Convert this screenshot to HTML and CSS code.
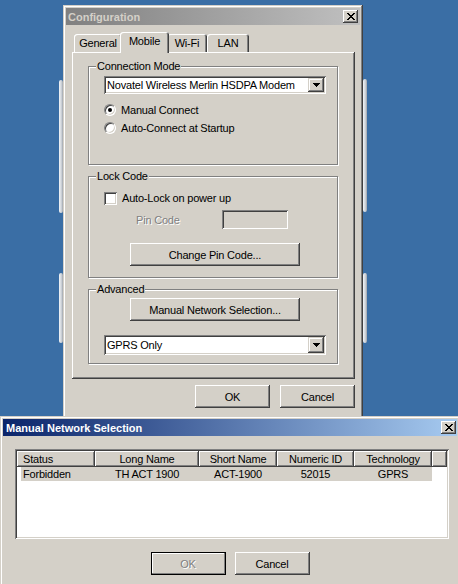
FILE: index.html
```html
<!DOCTYPE html>
<html>
<head>
<meta charset="utf-8">
<title>Configuration</title>
<link rel="stylesheet" href="styles.css">
</head>
<body>
  <div class="edge edge-l1"></div>
  <div class="edge edge-l2"></div>
  <div class="edge edge-r1"></div>
  <div class="edge edge-r2"></div>

  <div class="window config">
    <div class="titlebar inactive">
      <span class="title">Configuration</span>
      <span class="close"><svg width="8" height="7" viewBox="0 0 8 7" shape-rendering="crispEdges"><path fill="#000" d="M0 0h2v1H0zM6 0h2v1H6zM1 1h2v1H1zM5 1h2v1H5zM2 2h4v1H2zM3 3h2v1H3zM2 4h4v1H2zM1 5h2v1H1zM5 5h2v1H5zM0 6h2v1H0zM6 6h2v1H6z"/></svg></span>
    </div>
    <div class="tabstrip">
      <div class="tab tab-general">General</div>
      <div class="tab tab-mobile selected">Mobile</div>
      <div class="tab tab-wifi">Wi-Fi</div>
      <div class="tab tab-lan">LAN</div>
    </div>
    <div class="panel">
      <div class="group group-conn">
        <div class="legend">Connection Mode</div>
        <div class="combo combo-modem">
          <span class="combo-text">Novatel Wireless Merlin HSDPA Modem</span>
          <span class="combo-btn"><svg width="7" height="4" viewBox="0 0 7 4" shape-rendering="crispEdges"><path fill="#000" d="M0 0h7v1H0zM1 1h5v1H1zM2 2h3v1H2zM3 3h1v1H3z"/></svg></span>
        </div>
        <div class="option option-first"><span class="radio checked"></span><span>Manual Connect</span></div>
        <div class="option"><span class="radio"></span><span>Auto-Connect at Startup</span></div>
      </div>

      <div class="group group-lock">
        <div class="legend">Lock Code</div>
        <div class="check-row"><span class="checkbox"></span><span>Auto-Lock on power up</span></div>
        <div class="pin-row"><span class="pin-label">Pin Code</span><span class="textbox"></span></div>
        <button class="btn btn-wide btn-pin">Change Pin Code...</button>
      </div>

      <div class="group group-adv">
        <div class="legend">Advanced</div>
        <button class="btn btn-wide btn-mns">Manual Network Selection...</button>
        <div class="combo combo-gprs">
          <span class="combo-text">GPRS Only</span>
          <span class="combo-btn"><svg width="7" height="4" viewBox="0 0 7 4" shape-rendering="crispEdges"><path fill="#000" d="M0 0h7v1H0zM1 1h5v1H1zM2 2h3v1H2zM3 3h1v1H3z"/></svg></span>
        </div>
      </div>
    </div>
    <div class="button-row">
      <button class="btn">OK</button>
      <button class="btn">Cancel</button>
    </div>
  </div>

  <div class="window mns">
    <div class="titlebar active">
      <span class="title">Manual Network Selection</span>
      <span class="close"><svg width="8" height="7" viewBox="0 0 8 7" shape-rendering="crispEdges"><path fill="#000" d="M0 0h2v1H0zM6 0h2v1H6zM1 1h2v1H1zM5 1h2v1H5zM2 2h4v1H2zM3 3h2v1H3zM2 4h4v1H2zM1 5h2v1H1zM5 5h2v1H5zM0 6h2v1H0zM6 6h2v1H6z"/></svg></span>
    </div>
    <div class="listview">
      <div class="lv-header">
        <div class="hcell h-status">Status</div>
        <div class="hcell h-long">Long Name</div>
        <div class="hcell h-short">Short Name</div>
        <div class="hcell h-num">Numeric ID</div>
        <div class="hcell h-tech">Technology</div>
        <div class="hcell h-filler"></div>
      </div>
      <div class="lv-row">
        <div class="cell r-status">Forbidden</div>
        <div class="cell r-long">TH ACT 1900</div>
        <div class="cell r-short">ACT-1900</div>
        <div class="cell r-num">52015</div>
        <div class="cell r-tech">GPRS</div>
      </div>
    </div>
    <div class="dlg-buttons">
      <button class="btn btn-default" disabled><span class="disabled-text">OK</span></button>
      <button class="btn">Cancel</button>
    </div>
  </div>
</body>
</html>
```

FILE: styles.css
```css
* { box-sizing: border-box; }

html, body { margin: 0; padding: 0; }

body {
  width: 458px;
  height: 584px;
  overflow: hidden;
  position: relative;
  background: #3a6ea5;
  font-family: "Liberation Sans", Arial, sans-serif;
  font-size: 11px;
  letter-spacing: -0.2px;
  color: #000;
}

/* edges of windows lying behind on the desktop */
.edge {
  position: absolute;
  width: 4px;
  border-radius: 2px;
  background: linear-gradient(to right, #f2f5f9, #cdd2d8 60%, #9ea4ac);
}
.edge-l1 { left: 59px; top: 80px; height: 133px; }
.edge-l2 { left: 59px; top: 273px; height: 70px; }
.edge-r1 { left: 363px; top: 79px; height: 133px; }
.edge-r2 { left: 363px; top: 273px; height: 70px; }

/* windows */
.window {
  position: absolute;
  background: #d4d0c8;
  padding: 3px;
  box-shadow: inset -1px -1px #404040, inset 1px 1px #d4d0c8,
              inset -2px -2px #808080, inset 2px 2px #fff;
}
.config { left: 63px; top: 5px; width: 300px; height: 440px; }
.mns { left: 0; top: 416px; width: 460px; height: 180px; }

.titlebar {
  height: 17px;
  display: flex;
  align-items: center;
  justify-content: space-between;
  padding-left: 2px;
  font-weight: bold;
  letter-spacing: 0;
  white-space: nowrap;
}
.titlebar.inactive { background: linear-gradient(to right, #808080, #c0c0c0); color: #d4d0c8; }
.titlebar.active { background: linear-gradient(to right, #0a246a, #a6caf0); color: #fff; padding-left: 3px; }

.close {
  width: 15px;
  height: 13px;
  margin-right: 2px;
  background: #d4d0c8;
  display: flex;
  align-items: center;
  justify-content: center;
  box-shadow: inset -1px -1px #404040, inset 1px 1px #fff,
              inset -2px -2px #808080, inset 2px 2px #d4d0c8;
}
.mns .close { margin-right: 1px; }

/* tabs */
.tabstrip {
  display: flex;
  align-items: flex-end;
  height: 20px;
  margin: 7px 0 0 6px;
  padding-left: 2px;
}
.tab {
  height: 18px;
  line-height: 18px;
  text-align: center;
  background: #d4d0c8;
  border-radius: 3px 3px 0 0;
  box-shadow: inset 1px 1px #fff, inset -1px 0 #404040, inset -2px 0 #808080;
}
.tab-general { width: 48px; }
.tab-mobile { width: 49px; }
.tab-wifi { width: 40px; }
.tab-lan { width: 42px; }
.tab.selected {
  position: relative;
  z-index: 1;
  height: 21px;
  margin: 0 -2px -1px -2px;
  padding-bottom: 3px;
}

.panel {
  margin-left: 6px;
  width: 283px;
  height: 327px;
  padding: 14px 17px 0 16px;
  box-shadow: inset -1px -1px #404040, inset 1px 1px #fff, inset -2px -2px #808080;
}

/* group boxes */
.group {
  width: 250px;
  border: 1px solid #808080;
  box-shadow: inset 1px 1px #fff, 1px 1px #fff;
  padding-left: 15px;
}
.group-conn { height: 99px; }
.group-lock { height: 102px; margin-top: 11px; }
.group-adv { height: 75px; margin-top: 11px; }

.legend {
  width: fit-content;
  height: 13px;
  line-height: 13px;
  margin: -7px 0 0 -8px;
  padding: 0 1px;
  background: #d4d0c8;
  white-space: nowrap;
}

/* combo boxes */
.combo {
  display: flex;
  align-items: stretch;
  width: 222px;
  background: #fff;
  padding: 2px;
  box-shadow: inset 1px 1px #808080, inset -1px -1px #fff,
              inset 2px 2px #404040, inset -2px -2px #d4d0c8;
}
.combo-modem { height: 18px; margin-top: 3px; }
.combo-gprs { height: 20px; margin-top: 14px; }
.combo-text {
  flex: 1;
  padding-left: 1px;
  display: flex;
  align-items: center;
  white-space: nowrap;
  overflow: hidden;
}
.combo-btn {
  width: 16px;
  display: flex;
  align-items: center;
  justify-content: center;
  background: #d4d0c8;
  box-shadow: inset -1px -1px #404040, inset 1px 1px #d4d0c8,
              inset -2px -2px #808080, inset 2px 2px #fff;
}

/* radio options */
.option {
  display: flex;
  align-items: center;
  gap: 5px;
  height: 18px;
  white-space: nowrap;
}
.option-first { margin-top: 7px; }
.radio {
  position: relative;
  width: 12px;
  height: 12px;
  border-radius: 50%;
  background: #fff;
  border: 1px solid;
  border-color: #808080 #fff #fff #808080;
  box-shadow: inset 1px 1px #404040, inset -1px -1px #d4d0c8;
}
.radio.checked::after {
  content: "";
  position: absolute;
  left: 3px;
  top: 3px;
  width: 4px;
  height: 4px;
  border-radius: 50%;
  background: #000;
}

/* lock code */
.check-row {
  display: flex;
  align-items: center;
  gap: 5px;
  height: 18px;
  margin-top: 6px;
  white-space: nowrap;
}
.checkbox {
  width: 13px;
  height: 13px;
  background: #fff;
  box-shadow: inset 1px 1px #808080, inset -1px -1px #fff,
              inset 2px 2px #404040, inset -2px -2px #d4d0c8;
}
.pin-row {
  display: flex;
  align-items: center;
  height: 19px;
  margin-top: 3px;
}
.pin-label {
  width: 86px;
  margin-left: 32px;
  color: #808080;
  text-shadow: 1px 1px 0 #fff;
}
.textbox {
  width: 66px;
  height: 19px;
  background: #d4d0c8;
  box-shadow: inset 1px 1px #808080, inset -1px -1px #fff,
              inset 2px 2px #404040, inset -2px -2px #d4d0c8;
}

/* buttons */
.btn {
  display: flex;
  align-items: center;
  justify-content: center;
  width: 75px;
  height: 23px;
  padding: 0;
  border: none;
  background: #d4d0c8;
  font: inherit;
  letter-spacing: inherit;
  color: #000;
  white-space: nowrap;
  box-shadow: inset -1px -1px #404040, inset 1px 1px #fff,
              inset -2px -2px #808080, inset 2px 2px #d4d0c8;
}
.btn-wide { width: 170px; margin-left: 26px; }
.btn-pin { margin-top: 14px; }
.btn-mns { margin-top: 2px; }
.btn-default {
  box-shadow: inset 0 0 0 1px #000, inset -2px -2px #808080, inset 2px 2px #fff;
}
.disabled-text { color: #808080; text-shadow: 1px 1px 0 #fff; }

.button-row {
  display: flex;
  justify-content: flex-end;
  gap: 10px;
  margin-top: 6px;
  padding-right: 5px;
}

/* list view */
.listview {
  width: 434px;
  height: 90px;
  margin: 13px 0 0 12px;
  padding: 2px;
  background: #fff;
  box-shadow: inset 1px 1px #808080, inset -1px -1px #fff,
              inset 2px 2px #404040, inset -2px -2px #d4d0c8;
}
.lv-header { display: flex; height: 16px; }
.hcell {
  flex: none;
  height: 16px;
  line-height: 16px;
  text-align: center;
  white-space: nowrap;
  background: #d4d0c8;
  box-shadow: inset -1px -1px #404040, inset 1px 1px #fff, inset -2px -2px #808080;
}
.h-status { width: 78px; text-align: left; padding-left: 6px; }
.h-long { width: 104px; }
.h-short { width: 78px; }
.h-num { width: 77px; }
.h-tech { width: 78px; }
.h-filler { flex: 1; }

.lv-row {
  display: flex;
  width: 411px;
  height: 14px;
  line-height: 14px;
  margin-left: 4px;
  background: #d4d0c8;
}
.cell { flex: none; text-align: center; white-space: nowrap; }
.r-status { width: 74px; padding-left: 2px; text-align: left; }
.r-long { width: 104px; }
.r-short { width: 78px; }
.r-num { width: 77px; }
.r-tech { width: 78px; }

.dlg-buttons {
  display: flex;
  justify-content: center;
  gap: 9px;
  margin-top: 13px;
}
```
